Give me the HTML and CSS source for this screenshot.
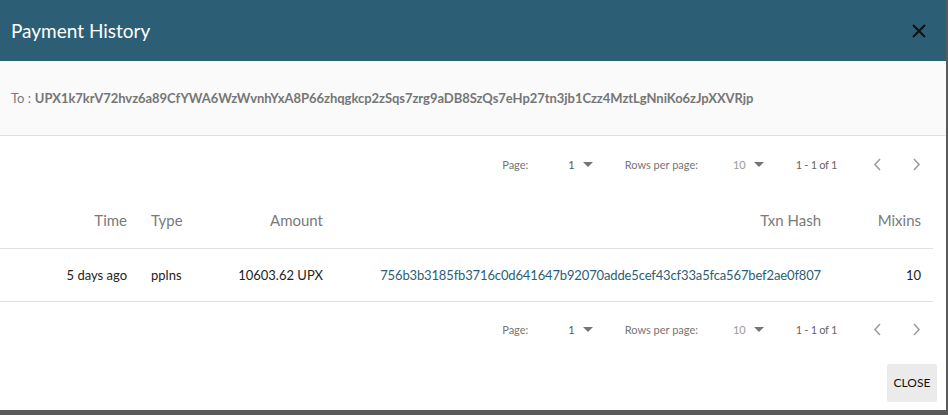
FILE: index.html
```html
<!DOCTYPE html>
<html lang="en">
<head>
  <meta charset="UTF-8" />
  <title>Payment History</title>
  <link rel="stylesheet" href="styles.css">
</head>
<body>
  <div class="dialog">
    <div class="dialog-title">
      <span>Payment History</span>
      <svg class="close-x" width="14" height="14" viewBox="0 0 14 14">
        <path d="M1 1 L13 13 M13 1 L1 13" stroke="#111" stroke-width="2" fill="none"/>
      </svg>
    </div>

    <div class="address-bar">
      To : <b>UPX1k7krV72hvz6a89CfYWA6WzWvnhYxA8P66zhqgkcp2zSqs7zrg9aDB8SzQs7eHp27tn3jb1Czz4MztLgNniKo6zJpXXVRjp</b>
    </div>

    <div class="pager">
      <span class="pager-label">Page:</span>
      <span class="pager-select">1 <i class="caret"></i></span>
      <span class="pager-label rows">Rows per page:</span>
      <span class="pager-select muted">10 <i class="caret"></i></span>
      <span class="pager-range">1 - 1 of 1</span>
      <svg class="pager-arrow prev" width="8" height="13" viewBox="0 0 8 13"><path d="M7 1 L2 6.5 L7 12" stroke="#9e9e9e" stroke-width="1.6" fill="none"/></svg>
      <svg class="pager-arrow" width="8" height="13" viewBox="0 0 8 13"><path d="M1 1 L6 6.5 L1 12" stroke="#9e9e9e" stroke-width="1.6" fill="none"/></svg>
    </div>

    <table class="grid">
      <colgroup>
        <col style="width:139px">
        <col style="width:70px">
        <col style="width:126px">
        <col style="width:498px">
        <col style="width:100px">
      </colgroup>
      <thead>
        <tr>
          <th class="right">Time</th>
          <th class="left">Type</th>
          <th class="right">Amount</th>
          <th class="right">Txn Hash</th>
          <th class="right">Mixins</th>
        </tr>
      </thead>
      <tbody>
        <tr>
          <td class="right">5 days ago</td>
          <td class="left">pplns</td>
          <td class="right">10603.62 UPX</td>
          <td class="right"><a class="hash" href="#">756b3b3185fb3716c0d641647b92070adde5cef43cf33a5fca567bef2ae0f807</a></td>
          <td class="right">10</td>
        </tr>
      </tbody>
    </table>

    <div class="pager">
      <span class="pager-label">Page:</span>
      <span class="pager-select">1 <i class="caret"></i></span>
      <span class="pager-label rows">Rows per page:</span>
      <span class="pager-select muted">10 <i class="caret"></i></span>
      <span class="pager-range">1 - 1 of 1</span>
      <svg class="pager-arrow prev" width="8" height="13" viewBox="0 0 8 13"><path d="M7 1 L2 6.5 L7 12" stroke="#9e9e9e" stroke-width="1.6" fill="none"/></svg>
      <svg class="pager-arrow" width="8" height="13" viewBox="0 0 8 13"><path d="M1 1 L6 6.5 L1 12" stroke="#9e9e9e" stroke-width="1.6" fill="none"/></svg>
    </div>

    <div class="actions">
      <button class="btn-close">CLOSE</button>
    </div>
  </div>
</body>
</html>
```

FILE: styles.css
```css
* { box-sizing: border-box; }

body {
  margin: 0;
  background: #5a5a5a;
  font-family: Lato, 'Liberation Sans', sans-serif;
}

.dialog {
  width: 946px;
  height: 410px;
  background: #ffffff;
  overflow: hidden;
}

.dialog-title {
  height: 61px;
  background: #2c5e75;
  color: #ffffff;
  font-size: 19px;
  display: flex;
  align-items: center;
  justify-content: space-between;
  padding: 0 20px 0 11px;
}

.address-bar {
  height: 75px;
  background: #fafafa;
  border-bottom: 1px solid #e0e0e0;
  display: flex;
  align-items: center;
  padding-left: 11px;
  font-size: 13px;
  color: #7a7a7a;
  white-space: nowrap;
  letter-spacing: -0.05px;
}

.address-bar b {
  margin-left: 4px;
  color: #767676;
}

.pager {
  height: 56px;
  display: flex;
  align-items: center;
  justify-content: flex-end;
  padding-right: 25px;
  font-size: 11px;
  color: #757575;
}

.pager-label { margin-right: 40px; }
.pager-label.rows { margin-right: 35px; }

.pager-select {
  display: flex;
  align-items: center;
  color: #555;
  margin-right: 32px;
}

.pager-select.muted { color: #999; }

.caret {
  display: inline-block;
  margin-left: 8px;
  border-left: 5px solid transparent;
  border-right: 5px solid transparent;
  border-top: 5px solid #757575;
}

.pager-range {
  margin-right: 36px;
  color: #666;
  letter-spacing: -0.3px;
}

.pager-arrow.prev { margin-right: 32px; }

.grid {
  width: 933px;
  table-layout: fixed;
  border-collapse: collapse;
}

.grid th {
  height: 56px;
  font-size: 15px;
  font-weight: normal;
  color: #7a7a7a;
  border-bottom: 1px solid #e0e0e0;
  padding: 0 12px;
}

.grid td {
  height: 53px;
  font-size: 13px;
  color: #222;
  border-bottom: 1px solid #e0e0e0;
  padding: 0 12px;
  white-space: nowrap;
}

.grid .right { text-align: right; }
.grid .left { text-align: left; }

.hash {
  color: #2c5e75;
  text-decoration: none;
  letter-spacing: -0.14px;
}

.actions {
  display: flex;
  justify-content: flex-end;
  padding: 6px 9px 0 0;
}

.btn-close {
  width: 50px;
  height: 38px;
  border: none;
  border-radius: 2px;
  background: #ebebeb;
  color: #111;
  font-family: Lato, 'Liberation Sans', sans-serif;
  font-size: 12px;
  padding: 0;
}
```
